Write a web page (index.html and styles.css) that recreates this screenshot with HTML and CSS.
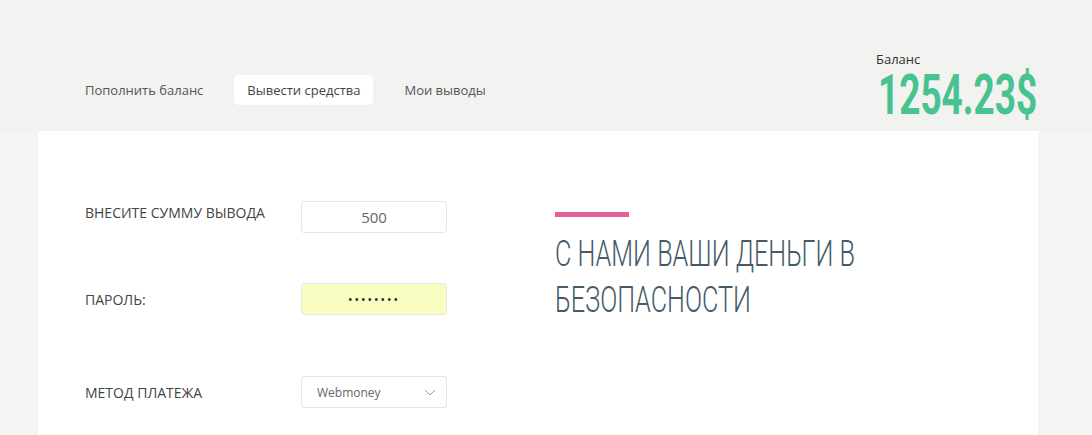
FILE: index.html
```html
<!DOCTYPE html>
<html lang="ru">
<head>
    <meta charset="UTF-8">
    <meta name="viewport" content="width=device-width, initial-scale=1.0">
    <title>Вывести средства</title>
    <link rel="stylesheet" href="styles.css">
</head>
<body>
    <header class="top">
        <div class="wrap top-inner">
            <nav class="tabs">
                <a class="tab" href="#">Пополнить баланс</a>
                <a class="tab active" href="#">Вывести средства</a>
                <a class="tab" href="#">Мои выводы</a>
            </nav>
            <div class="balance">
                <div class="balance-label">Баланс</div>
                <div class="balance-sum"><span>1254.23$</span></div>
            </div>
        </div>
    </header>

    <main class="wrap panel">
        <form class="withdraw">
            <div class="row row-first">
                <label class="label" for="sum">Внесите сумму вывода</label>
                <input class="field" id="sum" type="text" value="500">
            </div>
            <div class="row">
                <label class="label" for="pass">Пароль:</label>
                <input class="field field-pass" id="pass" type="password" value="12345678">
            </div>
            <div class="row row-last">
                <label class="label" for="method">Метод платежа</label>
                <div class="select">
                    <span>Webmoney</span>
                    <svg width="12" height="7" viewBox="0 0 12 7"><path d="M1 1l5 5 5-5" fill="none" stroke="#999" stroke-width="1"/></svg>
                </div>
            </div>
        </form>
        <div class="promo">
            <div class="promo-line"></div>
            <h2 class="promo-title"><span>С нами ваши деньги в<br>безопасности</span></h2>
        </div>
    </main>
</body>
</html>
```

FILE: styles.css
```css
body {
    margin: 0;
    padding-right: 16px;
    background-color: #f4f4f4;
    font-family: "Open Sans", sans-serif;
    color: #444;
}
.wrap {
    width: 1000px;
    margin: 0 auto;
}
.top {
    background-color: #f2f2f0;
    height: 131px;
    margin-right: -16px;
    padding-right: 16px;
}
.top-inner {
    display: flex;
    justify-content: space-between;
    align-items: flex-start;
    height: 100%;
}
.tabs {
    display: flex;
    gap: 4px;
    padding-left: 34px;
    margin-top: 75px;
}
.tab {
    display: block;
    padding: 0 13px;
    height: 30px;
    line-height: 30px;
    font-size: 13px;
    color: #555;
    text-decoration: none;
    border-radius: 5px;
}
.tab.active {
    background-color: #fff;
    color: #444;
    margin: 0 14px;
}
.balance {
    width: 162px;
    margin-top: 50px;
}
.balance-label {
    font-size: 13px;
    color: #333;
    line-height: 18px;
}
.balance-sum {
    color: #48c28f;
    font-family: "Roboto", sans-serif;
    font-weight: 700;
    font-size: 56px;
    line-height: 42px;
    margin-top: 6px;
    white-space: nowrap;
}
.balance-sum span {
    display: inline-block;
    transform: scaleX(0.66);
    transform-origin: left center;
    margin-left: 2px;
}
.panel {
    background-color: #fff;
    display: flex;
    height: 304px;
}
.withdraw {
    width: 470px;
    padding: 70px 0 0 47px;
}
.row {
    display: flex;
    align-items: center;
    height: 32px;
    margin-bottom: 50px;
}
.row-last {
    margin-top: 11px;
    padding-top: 11px;
}
.label {
    width: 216px;
    font-size: 14px;
    text-transform: uppercase;
    color: #444;
}
.row-first .label {
    margin-top: -10px;
}
.field {
    box-sizing: border-box;
    width: 146px;
    height: 32px;
    border: 1px solid #e6e6e6;
    border-radius: 3px;
    text-align: center;
    font-family: "Open Sans", sans-serif;
    font-size: 15px;
    color: #666;
    padding: 0;
}
.field-pass {
    background-color: #fafdc2;
    color: #222;
    font-size: 12px;
    letter-spacing: 2px;
}
.select {
    box-sizing: border-box;
    width: 146px;
    height: 32px;
    border: 1px solid #e6e6e6;
    border-radius: 3px;
    display: flex;
    align-items: center;
    justify-content: space-between;
    padding: 0 10px 0 15px;
    font-size: 12px;
    color: #666;
}
.promo {
    padding-top: 81px;
}
.promo-line {
    width: 74px;
    height: 5px;
    background-color: #e35d9a;
}
.promo-title {
    margin: 14px 0 0;
    font-family: "Roboto", sans-serif;
    font-weight: 300;
    font-size: 36px;
    line-height: 46px;
    color: #455a68;
    text-transform: uppercase;
    white-space: nowrap;
}
.promo-title span {
    display: inline-block;
    transform: scaleX(0.70);
    transform-origin: left top;
}
```
